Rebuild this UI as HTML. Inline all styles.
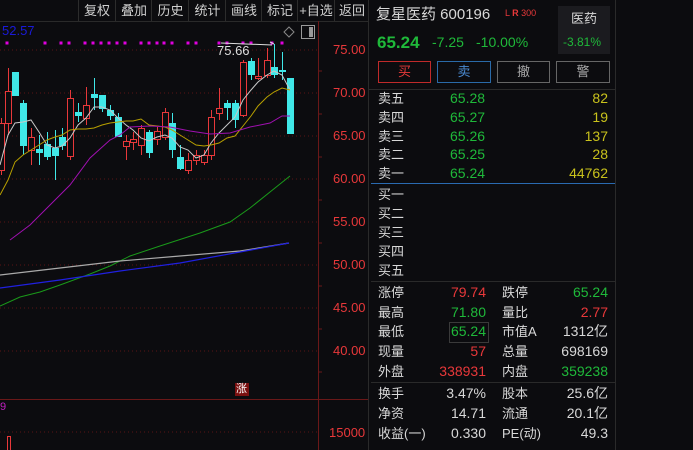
<!DOCTYPE html>
<html><head><meta charset="utf-8"><style>
body{margin:0;width:693px;height:450px;background:#0c0c0f;overflow:hidden;position:relative;font-family:"Liberation Sans","Noto Sans CJK SC",sans-serif;}
.a{position:absolute;white-space:nowrap;line-height:1;}
.w{color:#d8d8d8}.g{color:#1fb93a}.r{color:#e8383a}.y{color:#c9c21c}
.tb{position:absolute;top:0;height:21px;border-left:1px solid #2c2c2c;color:#cfcfcf;font-size:13px;line-height:21px;text-align:center}
.btn{position:absolute;top:61px;height:20px;border:1px solid;font-size:13px;line-height:20px;text-align:center}
.l{position:absolute;font-size:13px;line-height:1;color:#d8d8d8}
.v{position:absolute;font-size:14px;line-height:1;text-align:right}
</style></head><body>
<div style="position:absolute;left:0;top:21px;width:368px;height:1px;background:#2a2a2a"></div>
<div class="tb" style="left:78px;width:36px">复权</div>
<div class="tb" style="left:115px;width:36px">叠加</div>
<div class="tb" style="left:151px;width:37px">历史</div>
<div class="tb" style="left:188px;width:37px">统计</div>
<div class="tb" style="left:225px;width:36px">画线</div>
<div class="tb" style="left:261px;width:36px">标记</div>
<div class="tb" style="left:297px;width:36px">+自选</div>
<div class="tb" style="left:334px;width:34px">返回</div>
<div class="a" style="left:2px;top:24px;font-size:13px;color:#1a1ad8">52.57</div>
<svg style="position:absolute;left:0;top:0" width="368" height="450">
<g stroke="#5a1414" stroke-dasharray="1,3">
<line x1="0" y1="50" x2="318" y2="50"/><line x1="0" y1="93" x2="318" y2="93"/><line x1="0" y1="136" x2="318" y2="136"/><line x1="0" y1="179" x2="318" y2="179"/><line x1="0" y1="222" x2="318" y2="222"/><line x1="0" y1="265" x2="318" y2="265"/><line x1="0" y1="308" x2="318" y2="308"/><line x1="0" y1="351" x2="318" y2="351"/><line x1="0" y1="432" x2="318" y2="432"/>
</g>
<line x1="318.5" y1="21" x2="318.5" y2="450" stroke="#6a1818"/>
<line x1="0" y1="399.5" x2="368" y2="399.5" stroke="#6a1818"/>
<g stroke="#6a1818"><line x1="318" y1="71" x2="322" y2="71"/><line x1="318" y1="114" x2="322" y2="114"/><line x1="318" y1="157" x2="322" y2="157"/><line x1="318" y1="200" x2="322" y2="200"/><line x1="318" y1="243" x2="322" y2="243"/><line x1="318" y1="286" x2="322" y2="286"/><line x1="318" y1="329" x2="322" y2="329"/><line x1="318" y1="372" x2="322" y2="372"/></g>
<path d="M289 27 L294 32 L289 37 L284 32 Z" fill="none" stroke="#888"/>
<rect x="301.5" y="25.5" width="13" height="13" fill="none" stroke="#999"/><rect x="309" y="27" width="4" height="10" fill="#999"/>
<g fill="#e000e0" id="dots"></g>
<g id="c"></g>
<polyline fill="none" stroke="#c8c8c8" stroke-width="1" points="0,165 8,135 15,123 23,122 31,120 39,132 47,145 55,148 62,146 70,138 78,125 86,118 94,107 102,107 110,110 118,118 126,125 133,130 141,138 149,141 157,137 165,135 172,138 180,147 188,150 196,158 204,155 211,143 219,133 227,125 235,117 243,100 251,90 258,82 267,75 274,71 282,75 290,90"/>
<polyline fill="none" stroke="#b8a000" stroke-width="1" points="0,195 8,180 15,162 23,155 31,150 39,145 47,140 55,137 62,135 70,130 78,129 86,129 94,128 102,125 110,123 118,122 126,121 133,121 141,119 149,125 157,126 165,127 172,130 180,135 188,140 196,145 204,146 211,145 219,143 227,138 235,136 243,126 251,116 258,106 267,97 274,92 282,88 290,90"/>
<polyline fill="none" stroke="#a010b0" stroke-width="1" points="10,240 30,225 50,205 70,185 90,158 110,140 120,135 130,127 150,126 170,127 190,131 210,134 230,133 250,127 270,123 282,116 290,116"/>
<polyline fill="none" stroke="#1a9a1a" stroke-width="1" points="0,306 20,297 40,292 60,285 90,274 110,266 130,256 160,246 200,233 230,222 250,208 275,188 290,176"/>
<polyline fill="none" stroke="#aaaaaa" stroke-width="1.2" points="0,275 60,268 120,261 180,256 240,251 289,243"/>
<polyline fill="none" stroke="#2020e0" stroke-width="1.2" points="0,288 60,280 120,271 180,263 240,252 289,243"/>
<path d="M221 43 L272 45 M270 42 L274 44" stroke="#ddd" fill="none"/>
<rect x="7.5" y="436.5" width="3" height="14" fill="none" stroke="#e8383a"/>
<rect x="235" y="383" width="14" height="13" fill="#7a1010"/>
</svg>
<div class="a" style="left:217px;top:44px;font-size:13px;color:#ddd">75.66</div>
<div class="a" style="left:236px;top:384px;font-size:11px;color:#fff">涨</div>
<div class="a" style="left:0;top:402px;font-size:11px;color:#c020c0">9</div>
<div class="a r" style="left:333px;top:43px;font-size:13px">75.00</div>
<div class="a r" style="left:333px;top:86px;font-size:13px">70.00</div>
<div class="a r" style="left:333px;top:129px;font-size:13px">65.00</div>
<div class="a r" style="left:333px;top:172px;font-size:13px">60.00</div>
<div class="a r" style="left:333px;top:215px;font-size:13px">55.00</div>
<div class="a r" style="left:333px;top:258px;font-size:13px">50.00</div>
<div class="a r" style="left:333px;top:301px;font-size:13px">45.00</div>
<div class="a r" style="left:333px;top:344px;font-size:13px">40.00</div>
<div class="a r" style="left:329px;top:426px;font-size:13px">15000</div>

<div style="position:absolute;left:368px;top:0;width:1px;height:450px;background:#2a2a2a"></div>
<div style="position:absolute;left:615px;top:0;width:1px;height:450px;background:#2a2a2a"></div>
<div class="a w" style="left:376px;top:7px;font-size:15px">复星医药 600196</div>
<div class="a r" style="left:505px;top:9px;font-size:9px">L <b>R</b> 300</div>
<div style="position:absolute;left:558px;top:6px;width:52px;height:48px;background:#1b1b1f"></div>
<div class="a w" style="left:571px;top:12px;font-size:13px">医药</div>
<div class="a g" style="left:563px;top:36px;font-size:12px">-3.81%</div>
<div class="a g" style="left:377px;top:34px;font-size:17px;font-weight:bold">65.24</div>
<div class="a g" style="left:432px;top:35px;font-size:14px">-7.25</div>
<div class="a g" style="left:476px;top:35px;font-size:14px">-10.00%</div>
<div class="btn" style="left:378px;width:51px;border-color:#c02a2a;color:#e83a3a">买</div>
<div class="btn" style="left:437px;width:52px;border-color:#2a6aa8;color:#4a8ad0">卖</div>
<div class="btn" style="left:497px;width:51px;border-color:#666;color:#aaa">撤</div>
<div class="btn" style="left:556px;width:52px;border-color:#666;color:#aaa">警</div>
<div style="position:absolute;left:369px;top:89px;width:246px;height:1px;background:#2a2a2a"></div>
<div style="position:absolute;left:371px;top:183px;width:244px;height:1px;background:#2a6ab0"></div>
<div style="position:absolute;left:371px;top:281px;width:244px;height:1px;background:#2a2a2a"></div>
<div style="position:absolute;left:371px;top:382px;width:244px;height:1px;background:#2a2a2a"></div>
<div id="rp"></div>
<script>
var c='',d='';
[7,45,61,69,85,93,101,109,117,125,141,149,157,164,172,188,196,219,227,243,251,272,282].forEach(function(x){d+='<rect x="'+(x-1.5)+'" y="41.5" width="3" height="3"/>';});
document.getElementById('dots').innerHTML=d;
var K=[[1,123,170,118,175,'r'],[8,91,123,68,135,'r'],[15,72,96,72,96,'c'],[23,103,146,100,155,'c'],[31,137,150,128,165,'r'],[39,149,153,135,165,'c'],[47,144,157,132,160,'c'],[55,148,156,130,180,'c'],[62,137,146,128,150,'c'],[70,98,156,90,160,'r'],[78,112,116,103,122,'c'],[86,105,118,87,125,'r'],[94,94,98,78,110,'c'],[102,95,109,95,112,'c'],[110,110,116,105,120,'c'],[118,117,137,113,137,'c'],[126,141,146,135,160,'r'],[133,139,142,132,150,'r'],[141,128,145,125,155,'r'],[149,132,153,130,158,'c'],[157,131,139,127,145,'r'],[165,112,137,108,140,'r'],[172,123,150,113,158,'c'],[180,157,169,145,170,'c'],[188,160,170,153,174,'r'],[196,155,160,150,165,'r'],[204,155,162,150,165,'r'],[211,117,155,110,160,'r'],[219,108,113,88,120,'r'],[227,103,108,100,120,'c'],[235,103,120,100,128,'c'],[243,62,115,60,117,'r'],[251,61,75,58,80,'c'],[258,76,78,58,80,'r'],[267,60,75,48,78,'r'],[274,67,75,44,78,'c'],[282,70,72,52,80,'c'],[290,78,134,78,134,'c']];
K.forEach(function(k){var x=k[0],col=k[5]=='r'?'#e8383a':'#40e8e8';
c+='<line x1="'+(x+.5)+'" y1="'+k[3]+'" x2="'+(x+.5)+'" y2="'+k[4]+'" stroke="'+col+'"/>';
if(k[5]=='r')c+='<rect x="'+(x-2.5)+'" y="'+(k[1]+.5)+'" width="6" height="'+Math.max(1,k[2]-k[1])+'" fill="#0c0c0f" stroke="'+col+'"/>';
else c+='<rect x="'+(x-3)+'" y="'+k[1]+'" width="7" height="'+Math.max(1,k[2]-k[1])+'" fill="'+col+'"/>';});
document.getElementById('c').innerHTML=c;
var h='';
function L(x,y,t){h+='<div class="l" style="left:'+x+'px;top:'+y+'px">'+t+'</div>';}
function V(r,y,t,cl){h+='<div class="v '+cl+'" style="right:'+(693-r)+'px;top:'+y+'px">'+t+'</div>';}
var s=[['卖五','65.28','82'],['卖四','65.27','19'],['卖三','65.26','137'],['卖二','65.25','28'],['卖一','65.24','44762']];
s.forEach(function(a,i){var y=92+i*18.8;L(378,y,a[0]);h+='<div class="v g" style="left:450px;top:'+(y-1)+'px">'+a[1]+'</div>';V(608,y-1,a[2],'y');});
['买一','买二','买三','买四','买五'].forEach(function(a,i){L(378,188+i*19,a);});
var t=[['涨停','79.74','r','跌停','65.24','g'],['最高','71.80','g','量比','2.77','r'],['最低','65.24','g','市值A','1312亿','w'],['现量','57','r','总量','698169','w'],['外盘','338931','r','内盘','359238','g']];
t.forEach(function(a,i){var y=286+i*19.7;L(378,y,a[0]);V(486,y-1,a[1],a[2]);L(502,y,a[3]);V(608,y-1,a[4],a[5]);});
h+='<div style="position:absolute;left:449px;top:322px;width:38px;height:19px;border:1px solid #3a3a3a"></div>';
var u=[['换手','3.47%','股本','25.6亿'],['净资','14.71','流通','20.1亿'],['收益(一)','0.330','PE(动)','49.3']];
u.forEach(function(a,i){var y=387+i*20;L(378,y,a[0]);V(486,y-1,a[1],'w');L(502,y,a[2]);V(608,y-1,a[3],'w');});
document.getElementById('rp').innerHTML=h;
</script>
</body></html>
